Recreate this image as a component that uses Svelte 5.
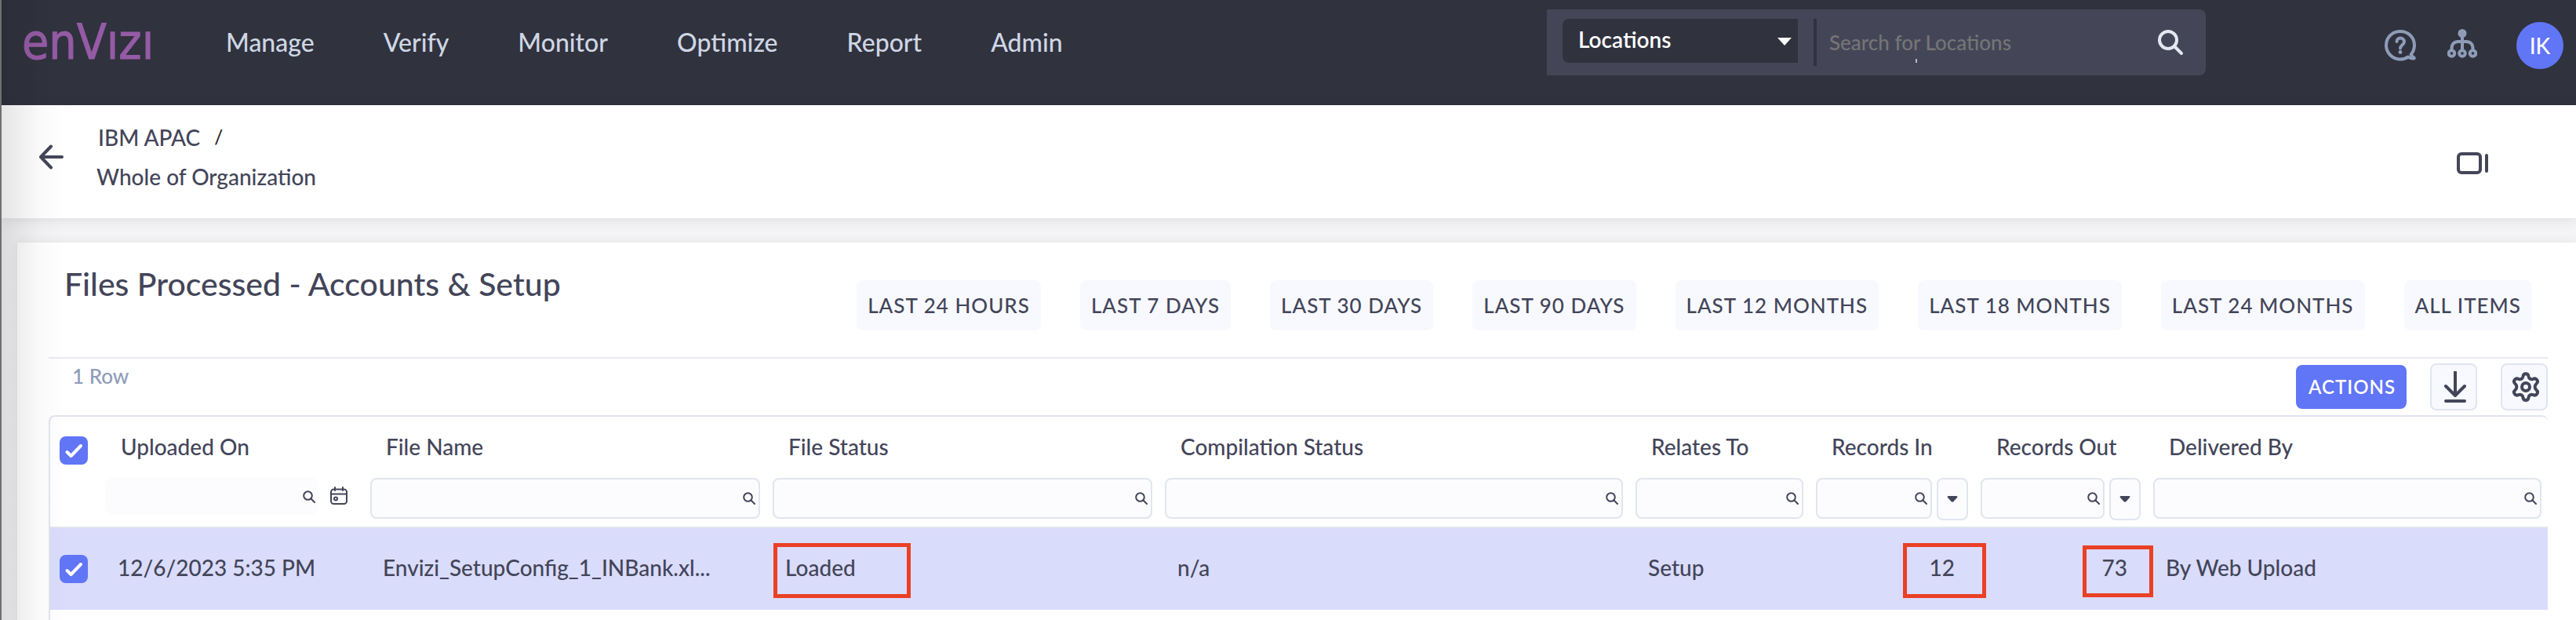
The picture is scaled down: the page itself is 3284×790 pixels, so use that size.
<script>
  const menu = ['Manage', 'Verify', 'Monitor', 'Optimize', 'Report', 'Admin'];
  const ranges = [
    'LAST 24 HOURS',
    'LAST 7 DAYS',
    'LAST 30 DAYS',
    'LAST 90 DAYS',
    'LAST 12 MONTHS',
    'LAST 18 MONTHS',
    'LAST 24 MONTHS',
    'ALL ITEMS'
  ];
  const columns = [
    { key: 'uploaded', label: 'Uploaded On', width: 338, date: true },
    { key: 'name', label: 'File Name', width: 513 },
    { key: 'status', label: 'File Status', width: 500, mark: 'wide' },
    { key: 'compilation', label: 'Compilation Status', width: 600 },
    { key: 'relates', label: 'Relates To', width: 230 },
    { key: 'recordsIn', label: 'Records In', width: 210, numeric: true, mark: 'in' },
    { key: 'recordsOut', label: 'Records Out', width: 220, numeric: true, mark: 'out' },
    { key: 'delivered', label: 'Delivered By', width: null }
  ];
  const rows = [
    {
      uploaded: '12/6/2023 5:35 PM',
      name: 'Envizi_SetupConfig_1_INBank.xl...',
      status: 'Loaded',
      compilation: 'n/a',
      relates: 'Setup',
      recordsIn: '12',
      recordsOut: '73',
      delivered: 'By Web Upload'
    }
  ];
</script>

{#snippet magnifier()}
  <svg class="magnifier" viewBox="0 0 16 16" aria-hidden="true">
    <circle cx="6.5" cy="6.5" r="5.3" />
    <path d="M10.5 10.5 L15 15" />
  </svg>
{/snippet}

<div class="page">
  <header class="topbar">
    <a class="logo" href="#home" aria-label="Envizi"><span>en</span><span class="vee">V</span><span>ızı</span></a>
    <nav>
      {#each menu as item}
        <a href="#{item.toLowerCase()}">{item}</a>
      {/each}
    </nav>
    <form class="search">
      <div class="scope">
        <select aria-label="Search scope">
          <option>Locations</option>
        </select>
        <svg viewBox="0 0 18 10" aria-hidden="true"><path d="M0 0H18L9 10Z" /></svg>
      </div>
      <input type="text" placeholder="Search for Locations" aria-label="Search for Locations" />
      <button type="button" aria-label="Search">
        <svg viewBox="0 0 34 34" aria-hidden="true">
          <circle cx="14" cy="14" r="11" />
          <path d="M22 22 L31 31" />
        </svg>
      </button>
      <span class="caret"></span>
    </form>
    <div class="tools">
      <button type="button" aria-label="Help">
        <svg class="help" viewBox="0 0 40 40" aria-hidden="true">
          <path d="M33.5 31.5 C36.5 28 38 24 38 19.5 C38 9.5 30 2 20 2 C10 2 2 9.500 2 19.500 C2 29.500 10 37.500 20 37.500 C24 37.500 27 36.500 30 34.500 C32 36 34 36.600 37 36.600 C37.600 36.600 38 36 37.500 35.500 C35.500 34 34.500 33 33.500 31.500Z" />
          <path d="M15.500 15 C15.500 12 17.500 10.500 20 10.500 C23 10.500 25 12.500 25 15.200 C25 19 20 19.500 20 23.500" />
          <circle cx="20" cy="28.500" r="2.400" />
        </svg>
      </button>
      <button type="button" aria-label="Hierarchy">
        <svg class="tree" viewBox="0 0 38 38" aria-hidden="true">
          <circle class="solid" cx="19" cy="6.500" r="5.500" />
          <path d="M19 10V27 M5.500 27V26C5.500 20 9 17 14 17H24C29 17 32.500 20 32.500 26V27" />
          <circle cx="5.500" cy="32" r="3.800" />
          <circle cx="19" cy="32" r="3.800" />
          <circle cx="32.500" cy="32" r="3.800" />
        </svg>
      </button>
      <button type="button" class="account" aria-label="Account"><span>IK</span></button>
    </div>
  </header>

  <section class="context">
    <button type="button" class="back" aria-label="Back">
      <svg viewBox="0 0 34 32" aria-hidden="true"><path d="M31 16H4 M17 2.500L4 16L17 29.500" /></svg>
    </button>
    <div class="crumbs">
      <div class="parent"><a href="#apac">IBM APAC</a><span>/</span></div>
      <div>Whole of Organization</div>
    </div>
    <button type="button" class="panel" aria-label="Toggle side panel">
      <svg viewBox="0 0 40 28" aria-hidden="true">
        <rect x="2" y="2" width="28" height="24" rx="4" />
        <path d="M38 4V24" />
      </svg>
    </button>
  </section>

  <main>
    <div class="heading">
      <h1>Files Processed - Accounts &amp; Setup</h1>
      <div class="ranges">
        {#each ranges as range}
          <button type="button">{range}</button>
        {/each}
      </div>
    </div>

    <div class="toolbar">
      <span class="count">1 Row</span>
      <div class="commands">
        <button type="button" class="primary">ACTIONS</button>
        <button type="button" class="square" aria-label="Download">
          <svg viewBox="0 0 40 40" aria-hidden="true"><path d="M20 1V31 M8 19L20 31L32 19 M8 38H32" /></svg>
        </button>
        <button type="button" class="square" aria-label="Settings">
          <svg viewBox="0 0 40 40" aria-hidden="true">
            <path d="M16.500 6.500 C17 2 23 2 23.500 6.500 C24 9.500 26.500 11 29.500 9.800 C33.500 8 37 13 33.500 16 C31 18.200 31 21.800 33.500 24 C37 27 33.500 32 29.500 30.200 C26.500 29 24 30.500 23.500 33.500 C23 38 17 38 16.500 33.500 C16 30.500 13.500 29 10.500 30.200 C6.500 32 3 27 6.500 24 C9 21.800 9 18.200 6.500 16 C3 13 6.500 8 10.500 9.800 C13.500 11 16 9.500 16.500 6.500Z" />
            <circle cx="20" cy="20" r="5" />
          </svg>
        </button>
      </div>
    </div>

    <div class="grid">
      <table>
        <colgroup>
          <col style="width: 62px" />
          {#each columns as column}
            <col style={column.width ? `width: ${column.width}px` : ''} />
          {/each}
        </colgroup>
        <thead>
          <tr>
            <th class="pick"><input type="checkbox" checked aria-label="Select all rows" /></th>
            {#each columns as column}
              <th scope="col">
                <div class="label">{column.label}</div>
                <div class="filter">
                  <div class="field" class:plain={column.date}>
                    <input type="text" aria-label="Filter {column.label}" />
                    {@render magnifier()}
                  </div>
                  {#if column.date}
                    <button type="button" class="calendar" aria-label="Pick a date">
                      <svg viewBox="0 0 24 24" aria-hidden="true">
                        <rect x="2" y="3.500" width="20" height="18.500" rx="3.500" />
                        <path d="M2 9.500H22 M7 1V5 M17 1V5" />
                        <circle cx="8" cy="15.500" r="2" />
                      </svg>
                    </button>
                  {/if}
                  {#if column.numeric}
                    <button type="button" class="operator" aria-label="{column.label} comparison">
                      <svg viewBox="0 0 14 8" aria-hidden="true"><path d="M1.500 0H12.500Q14 .5 13 2L8.500 7Q7 8.500 5.500 7L1 2Q0 .5 1.500 0Z" /></svg>
                    </button>
                  {/if}
                </div>
              </th>
            {/each}
          </tr>
        </thead>
        <tbody>
          {#each rows as row}
            <tr>
              <td class="pick"><input type="checkbox" checked aria-label="Select row" /></td>
              {#each columns as column}
                <td class:numeric={column.numeric}>
                  {row[column.key]}
                  {#if column.mark}<span class="mark {column.mark}"></span>{/if}
                </td>
              {/each}
            </tr>
          {/each}
        </tbody>
      </table>
    </div>
  </main>
  <div class="edge"></div>
</div>

<style>
  :global(body) {
    background: #f4f4f6;
  }
  .page,
  .page * {
    box-sizing: border-box;
  }
  .page {
    position: relative;
    display: flex;
    flex-direction: column;
    min-height: 100vh;
    overflow: hidden;
    color: #434559;
    font: 500 28px/36px Lato, sans-serif;
  }
  button,
  input,
  select {
    margin: 0;
    padding: 0;
    border: 0;
    background: none;
    color: inherit;
    font: inherit;
  }
  a {
    color: inherit;
    text-decoration: none;
  }
  svg {
    display: block;
    fill: none;
    stroke: currentColor;
    stroke-linecap: round;
    stroke-linejoin: round;
  }

  .topbar {
    display: flex;
    align-items: center;
    height: 134px;
    padding: 0 16px 26px 28px;
    background: #30323e;
    color: #cfd6e4;
  }
  .logo {
    display: flex;
    align-items: baseline;
    width: 260px;
    color: #955ba5;
    font-family: "DejaVu Sans Condensed", "DejaVu Sans", sans-serif;
    font-size: 62px;
    font-weight: 400;
    line-height: 72px;
    -webkit-text-stroke: 1px #955ba5;
  }
  nav {
    display: flex;
    gap: 88px;
    font-size: 32px;
    line-height: 40px;
  }
  .search {
    position: relative;
    display: flex;
    align-items: center;
    flex: 0 1 840px;
    height: 84px;
    margin: 0 228px 0 auto;
    padding: 0 28px 0 20px;
    border-radius: 0 8px 8px 0;
    background: #444658;
  }
  .scope {
    position: relative;
    width: 300px;
    margin: 0 20px 4px 0;
    color: #fff;
  }
  .scope select {
    display: block;
    width: 100%;
    height: 56px;
    padding: 0 40px 4px 20px;
    border-radius: 8px 0 0 8px;
    background: #30323e;
    font-weight: 600;
    appearance: none;
  }
  .scope svg {
    position: absolute;
    top: 24px;
    right: 8px;
    width: 18px;
    height: 10px;
    fill: #fff;
    stroke: none;
    pointer-events: none;
  }
  .search > input {
    flex: 1;
    min-width: 0;
    height: 60px;
    padding-left: 16px;
    border-left: 4px solid #30323e;
    font-size: 26px;
  }
  .search > input::placeholder {
    color: #757575;
    opacity: 1;
  }
  .search button svg {
    width: 34px;
    height: 34px;
    stroke: #e3e7f0;
    stroke-width: 4;
  }
  .caret {
    position: absolute;
    top: 63px;
    left: 470px;
    width: 2px;
    height: 5px;
    background: #b9b9bd;
  }
  .tools {
    display: flex;
    flex: none;
    align-items: center;
    margin-top: 8px;
    color: #8f9cb8;
  }
  .tools button {
    margin-right: 40px;
  }
  .help {
    width: 40px;
    height: 40px;
    stroke-width: 4;
  }
  .help circle,
  .tree .solid {
    fill: currentColor;
    stroke: none;
  }
  .tree {
    width: 38px;
    height: 38px;
    margin-bottom: 6px;
    stroke-width: 4;
  }
  .tools .account {
    width: 64px;
    height: 68px;
    margin: 0 0 0 6px;
    padding: 4px 0 4px 4px;
    border-radius: 12px;
  }
  .account span {
    display: block;
    border-radius: 50%;
    background: #6175f7;
    color: #fff;
    line-height: 60px;
  }

  .context {
    display: flex;
    align-items: center;
    padding: 16px 112px 28px 48px;
    background: #fff;
    box-shadow: 0 2px 14px rgba(40, 42, 60, 0.1);
    line-height: 50px;
  }
  .back {
    width: 75px;
  }
  .back svg {
    width: 34px;
    height: 32px;
    stroke-width: 4;
  }
  .parent {
    display: flex;
    gap: 18px;
    padding-left: 2px;
  }
  .parent span {
    color: #222;
    font-size: 24px;
  }
  .panel {
    margin: 16px 0 0 auto;
  }
  .panel svg {
    width: 40px;
    height: 28px;
    stroke-width: 4;
  }

  main {
    flex: 1;
    margin: 31px 0 0 22px;
    padding: 28px 36px 0 40px;
    background: #fff;
    box-shadow: 0 0 12px rgba(40, 42, 60, 0.08);
  }
  .heading {
    display: flex;
    justify-content: space-between;
    padding: 0 20px 34px;
    border-bottom: 2px solid #e7eaf3;
  }
  h1 {
    margin: 0;
    font-size: 41px;
    font-weight: 500;
    line-height: 50px;
  }
  .ranges {
    display: flex;
    gap: 50px;
    margin-top: 20px;
  }
  .ranges button {
    height: 64px;
    padding: 0 14px;
    border-radius: 8px;
    background: #f8f9fe;
    font-size: 26px;
    letter-spacing: 1px;
    white-space: nowrap;
  }
  .toolbar {
    display: flex;
    justify-content: space-between;
    padding: 4px 0 4px 30px;
  }
  .count {
    color: #8f9cb8;
    font-size: 26px;
  }
  .commands {
    display: flex;
    align-items: center;
    gap: 30px;
    height: 64px;
  }
  .primary {
    height: 56px;
    padding: 0 14px 0 16px;
    border-radius: 8px;
    background: #6175f7;
    color: #fff;
    font-size: 24px;
    font-weight: 600;
    letter-spacing: 1px;
  }
  .square {
    display: grid;
    place-items: center;
    width: 60px;
    height: 60px;
    padding-left: 4px;
    border: 2px solid #e1e5ee;
    border-radius: 8px;
    background: #f8f9fe;
  }
  .square svg {
    width: 40px;
    height: 40px;
    stroke-width: 4;
  }

  .grid {
    border: solid #e1e5ee;
    border-width: 2px 0 0 2px;
    border-radius: 8px 8px 0 0;
    padding-bottom: 40px;
  }
  table {
    width: 100%;
    border-collapse: separate;
    border-spacing: 0;
    table-layout: fixed;
  }
  th {
    height: 142px;
    padding: 20px 8px 8px;
    border-bottom: 2px solid #e1e5ee;
    font-weight: 500;
    text-align: left;
    vertical-align: top;
  }
  .label {
    padding-left: 20px;
    white-space: nowrap;
  }
  .filter {
    display: flex;
    gap: 6px;
    margin-top: 22px;
  }
  .field {
    position: relative;
    flex: 1;
    min-width: 0;
    height: 52px;
    border: 2px solid #e1e5ee;
    border-radius: 8px;
    background: #fcfcff;
  }
  .field.plain {
    flex: 0 0 272px;
    height: 46px;
    border: 0;
  }
  .field input {
    display: block;
    width: 100%;
    height: 100%;
    padding: 0 28px 0 12px;
  }
  .magnifier {
    position: absolute;
    top: 16px;
    right: 4px;
    width: 16px;
    height: 16px;
    stroke-width: 2;
  }
  .calendar {
    height: 46px;
    padding-left: 8px;
  }
  .calendar svg {
    width: 24px;
    height: 24px;
    stroke-width: 2;
  }
  .operator {
    display: grid;
    place-items: center;
    width: 40px;
    height: 54px;
    border: 2px solid #e1e5ee;
    border-radius: 8px;
    background: #fcfcff;
  }
  .operator svg {
    width: 14px;
    height: 8px;
    fill: currentColor;
    stroke: none;
  }
  td {
    position: relative;
    height: 104px;
    padding: 0 25px 4px 24px;
    background: #dadcfb;
    white-space: nowrap;
  }
  .numeric {
    text-align: right;
  }
  th.pick {
    padding: 25px 0 0 12px;
  }
  td.pick {
    padding: 0 0 0 12px;
  }
  .pick input {
    display: block;
    width: 36px;
    height: 36px;
    border-radius: 8px;
    background: #6175f7 url("data:image/svg+xml,%3Csvg xmlns='http://www.w3.org/2000/svg' viewBox='0 0 36 36' fill='none' stroke='white' stroke-width='4' stroke-linecap='round' stroke-linejoin='round'%3E%3Cpath d='M9.500 20L14.500 25L27 12'/%3E%3C/svg%3E");
    appearance: none;
  }
  .mark {
    position: absolute;
    z-index: 1;
    top: 19px;
    height: 70px;
    border: 5px solid #ea4026;
  }
  .wide {
    left: 9px;
    width: 175px;
  }
  .in {
    right: -15px;
    width: 106px;
  }
  .out {
    top: 22px;
    right: -8px;
    width: 90px;
    height: 66px;
  }
  .edge {
    position: absolute;
    top: 0;
    bottom: 0;
    left: 0;
    width: 86px;
    border-left: 2px solid #707073;
    background: linear-gradient(90deg, rgba(0, 0, 0, 0.1), rgba(0, 0, 0, 0.02) 50px, rgba(0, 0, 0, 0));
    pointer-events: none;
  }
</style>
